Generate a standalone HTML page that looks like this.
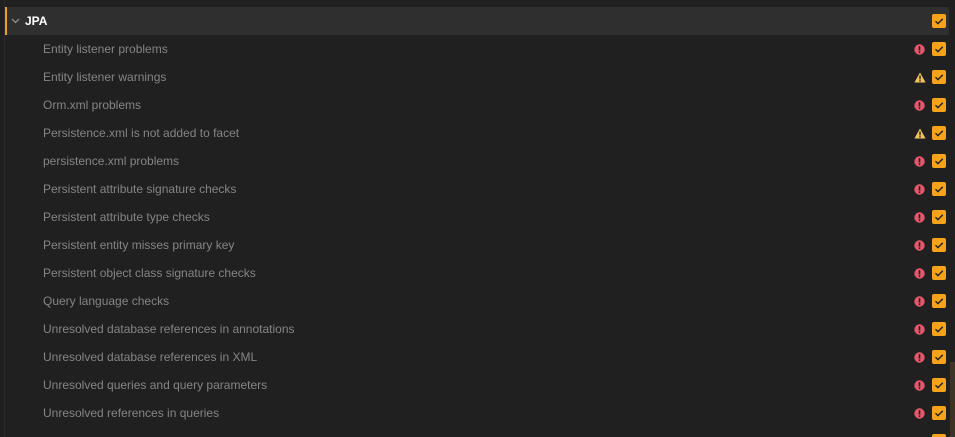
<!DOCTYPE html>
<html><head><meta charset="utf-8"><style>
html,body{margin:0;padding:0;width:955px;height:437px;overflow:hidden;background:#202020;font-family:"Liberation Sans",sans-serif;}
#wrap{position:relative;width:955px;height:437px;overflow:hidden}
.vline{position:absolute;left:4px;top:0;width:1px;height:437px;background:#2b2b2b}
.row{position:absolute;left:5px;width:944px;height:28px}
.hdr{background:#2f2f2f}
.bar{position:absolute;left:0;top:0;width:2px;height:28px;background:#f0a020}
.lbl{position:absolute;left:38px;top:7px;font-size:12px;color:#858585;white-space:nowrap}
.hl{position:absolute;left:20px;top:7px;font-size:12px;color:#fff;font-weight:bold}
.cb{position:absolute;left:927px;top:7px;width:14px;height:14px;background:#f7a21b;border-radius:2px}
.cb svg{position:absolute;left:0;top:0}
.ic{position:absolute;left:909px;top:7px}
.sb{position:absolute;left:950px;top:362px;width:5px;height:75px;background:#3d3425}
</style></head><body><div id="wrap">
<div class="vline"></div>
<div class="sb"></div>
<div class="row" style="top:-21px"><div class="cb"><svg width="14" height="14"><path d="M3.5 7.2 L6 9.6 L10.8 4.8" stroke="#222" stroke-width="1.4" fill="none"/></svg></div></div>
<div class="row hdr" style="top:7px"><div class="bar"></div>
<svg style="position:absolute;left:6px;top:11px" width="9" height="6"><path d="M1 1 L4.5 4.5 L8 1" stroke="#999" stroke-width="1.2" fill="none"/></svg>
<div class="hl">JPA</div>
<div class="cb"><svg width="14" height="14"><path d="M3.5 7.2 L6 9.6 L10.8 4.8" stroke="#222" stroke-width="1.4" fill="none"/></svg></div></div>
<div id="rows"></div>
<div class="row" style="top:427px"><div class="cb"><svg width="14" height="14"><path d="M3.5 7.2 L6 9.6 L10.8 4.8" stroke="#222" stroke-width="1.4" fill="none"/></svg></div></div>
</div>
<script>
var items=[["Entity listener problems","e"],["Entity listener warnings","w"],["Orm.xml problems","e"],["Persistence.xml is not added to facet","w"],["persistence.xml problems","e"],["Persistent attribute signature checks","e"],["Persistent attribute type checks","e"],["Persistent entity misses primary key","e"],["Persistent object class signature checks","e"],["Query language checks","e"],["Unresolved database references in annotations","e"],["Unresolved database references in XML","e"],["Unresolved queries and query parameters","e"],["Unresolved references in queries","e"]];
var err='<svg width="11" height="11"><circle cx="5.5" cy="5.5" r="5.2" fill="#e8566b"/><rect x="4.7" y="2.2" width="1.6" height="4.4" fill="#202020"/><rect x="4.7" y="7.4" width="1.6" height="1.6" fill="#202020"/></svg>';
var warn='<svg width="12" height="11"><path d="M6 0.5 L11.6 10.5 L0.4 10.5 Z" fill="#f2c55c"/><rect x="5.3" y="3.5" width="1.4" height="4" fill="#202020"/><rect x="5.3" y="8.2" width="1.4" height="1.4" fill="#202020"/></svg>';
var h='';
items.forEach(function(it,i){
h+='<div class="row" style="top:'+(35+i*28)+'px"><div class="lbl">'+it[0]+'</div><div class="ic">'+(it[1]=="e"?err:warn)+'</div><div class="cb"><svg width="14" height="14"><path d="M3.5 7.2 L6 9.6 L10.8 4.8" stroke="#222" stroke-width="1.4" fill="none"/></svg></div></div>';
});
document.getElementById('rows').innerHTML=h;
</script>
</body></html>
